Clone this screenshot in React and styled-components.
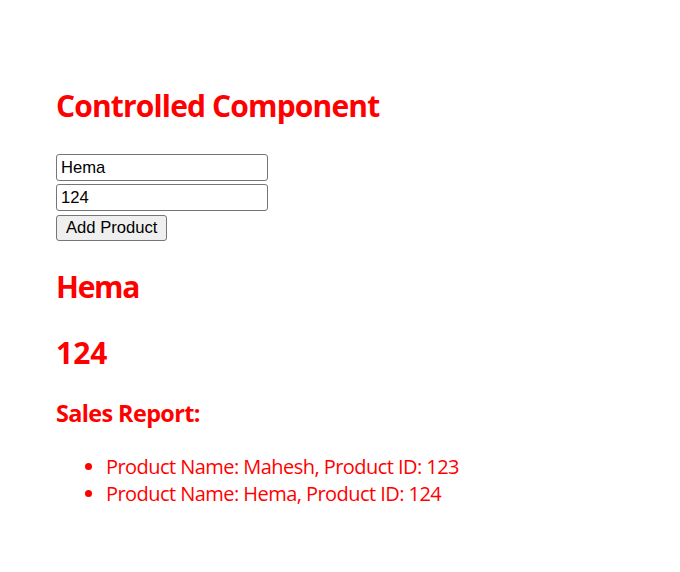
import React, { useState } from "react";
import styled, { createGlobalStyle } from "styled-components";

const GlobalStyle = createGlobalStyle`
  body {
    margin: 0;
    background: #ffffff;
    font-family: "Open Sans", "Noto Sans", sans-serif;
  }
`;

const Page = styled.div`
  padding: 86px 56px 40px;
  color: #ff0000;
`;

const Title = styled.h2`
  margin: 0;
  font-size: 30px;
  line-height: 40px;
  font-weight: 700;
  letter-spacing: -0.85px;
`;

const Form = styled.form`
  margin-top: 28px;
  display: flex;
  flex-direction: column;
  align-items: flex-start;
  gap: 3px;
`;

const Field = styled.input`
  box-sizing: border-box;
  width: 212px;
  height: 27px;
  margin: 0;
  padding: 0 4px;
  border: 1px solid #767676;
  border-radius: 3px;
  font-family: "Liberation Sans", Arial, sans-serif;
  font-size: 16.6px;
  color: #000000;
  background: #ffffff;
`;

const Button = styled.button`
  box-sizing: border-box;
  height: 26px;
  margin-top: 1px;
  padding: 0 9px;
  border: 1px solid #767676;
  border-radius: 3px;
  background: #efefef;
  font-family: "Liberation Sans", Arial, sans-serif;
  font-size: 16.6px;
  color: #000000;
`;

const Value = styled.h2`
  margin: 26px 0 0;
  font-size: 30px;
  line-height: 40px;
  font-weight: 700;
  letter-spacing: ${(p) => (p.$numeric ? "0" : "-1.3px")};
`;

const ReportTitle = styled.h3`
  margin: 25px 0 0;
  font-size: 23.4px;
  line-height: 31px;
  font-weight: 700;
  letter-spacing: -0.6px;
`;

const List = styled.ul`
  margin: 25px 0 0;
  padding-left: 50px;
`;

const Item = styled.li`
  font-size: 20px;
  line-height: 26.6px;
  letter-spacing: -0.55px;
`;

export default function App() {
  const [name, setName] = useState("Hema");
  const [id, setId] = useState("124");
  const [products, setProducts] = useState([
    { name: "Mahesh", id: "123" },
    { name: "Hema", id: "124" },
  ]);

  const addProduct = (e) => {
    e.preventDefault();
    setProducts([...products, { name, id }]);
  };

  return (
    <Page>
      <GlobalStyle />
      <Title>Controlled Component</Title>
      <Form onSubmit={addProduct}>
        <Field value={name} onChange={(e) => setName(e.target.value)} />
        <Field value={id} onChange={(e) => setId(e.target.value)} />
        <Button type="submit">Add Product</Button>
      </Form>
      <Value>{name}</Value>
      <Value $numeric>{id}</Value>
      <ReportTitle>Sales Report:</ReportTitle>
      <List>
        {products.map((p, i) => (
          <Item key={i}>
            Product Name: {p.name}, Product ID: {p.id}
          </Item>
        ))}
      </List>
    </Page>
  );
}
